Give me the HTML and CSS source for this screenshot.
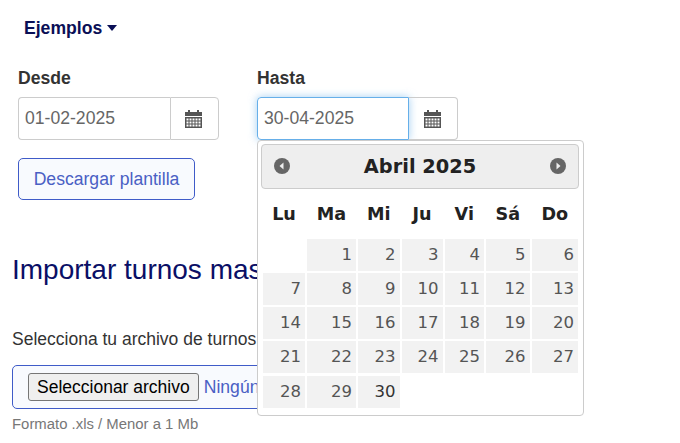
FILE: index.html
```html
<!DOCTYPE html>
<html lang="es">
<head>
  <meta charset="utf-8">
  <title>Importar turnos</title>
  <link rel="stylesheet" href="styles.css">
</head>
<body>
  <div class="examples"><span class="examples-link">Ejemplos</span><span class="caret"></span></div>

  <div class="dates">
    <div class="date-field">
      <label class="date-label">Desde</label>
      <div class="input-group">
        <div class="date-input">01-02-2025</div>
        <div class="addon">
          <svg class="cal-icon" width="17" height="18" viewBox="0 0 17 18"><path fill="#555" fill-rule="evenodd" d="M3 0h2v2h7V0h2v2h3v4H0V2h3zM0 7h17v11H0zM1.5 8.5v2h2v-2zm3 0v2h2v-2zm3 0v2h2v-2zm3 0v2h2v-2zm3 0v2h2v-2zm-12 3v2h2v-2zm3 0v2h2v-2zm3 0v2h2v-2zm3 0v2h2v-2zm3 0v2h2v-2zm-12 3v2h2v-2zm3 0v2h2v-2zm3 0v2h2v-2zm3 0v2h2v-2zm3 0v2h2v-2z"/></svg>
        </div>
      </div>
    </div>
    <div class="date-field">
      <label class="date-label">Hasta</label>
      <div class="input-group">
        <div class="date-input focused">30-04-2025</div>
        <div class="addon">
          <svg class="cal-icon" width="17" height="18" viewBox="0 0 17 18"><path fill="#555" fill-rule="evenodd" d="M3 0h2v2h7V0h2v2h3v4H0V2h3zM0 7h17v11H0zM1.5 8.5v2h2v-2zm3 0v2h2v-2zm3 0v2h2v-2zm3 0v2h2v-2zm3 0v2h2v-2zm-12 3v2h2v-2zm3 0v2h2v-2zm3 0v2h2v-2zm3 0v2h2v-2zm3 0v2h2v-2zm-12 3v2h2v-2zm3 0v2h2v-2zm3 0v2h2v-2zm3 0v2h2v-2zm3 0v2h2v-2z"/></svg>
        </div>
      </div>
      <div class="datepicker">
        <div class="dp-header">
          <svg width="16" height="16" viewBox="0 0 16 16"><circle cx="8" cy="8" r="8" fill="#666"/><path fill="#eee" d="M9.5 4.5v7L5.5 8z"/></svg>
          <span class="dp-title">Abril 2025</span>
          <svg width="16" height="16" viewBox="0 0 16 16"><circle cx="8" cy="8" r="8" fill="#666"/><path fill="#eee" d="M6.5 4.5v7l4-3.5z"/></svg>
        </div>
        <table class="dp-table">
          <colgroup>
            <col class="c1"><col class="c2"><col class="c3"><col class="c4"><col class="c5"><col class="c6"><col class="c7">
          </colgroup>
          <thead>
            <tr><th>Lu</th><th>Ma</th><th>Mi</th><th>Ju</th><th>Vi</th><th>Sá</th><th>Do</th></tr>
          </thead>
          <tbody>
            <tr><td></td><td><a>1</a></td><td><a>2</a></td><td><a>3</a></td><td><a>4</a></td><td><a>5</a></td><td><a>6</a></td></tr>
            <tr><td><a>7</a></td><td><a>8</a></td><td><a>9</a></td><td><a>10</a></td><td><a>11</a></td><td><a>12</a></td><td><a>13</a></td></tr>
            <tr><td><a>14</a></td><td><a>15</a></td><td><a>16</a></td><td><a>17</a></td><td><a>18</a></td><td><a>19</a></td><td><a>20</a></td></tr>
            <tr><td><a>21</a></td><td><a>22</a></td><td><a>23</a></td><td><a>24</a></td><td><a>25</a></td><td><a>26</a></td><td><a>27</a></td></tr>
            <tr class="last-row"><td><a>28</a></td><td><a>29</a></td><td><a class="selected">30</a></td><td></td><td></td><td></td><td></td></tr>
          </tbody>
        </table>
      </div>
    </div>
  </div>

  <button class="btn-outline">Descargar plantilla</button>

  <h2 class="import-title">Importar turnos masivamente</h2>
  <p class="import-text">Selecciona tu archivo de turnos para importarlos</p>
  <div class="file-box">
    <span class="file-btn">Seleccionar archivo</span>
    <span class="file-name">Ningún archivo seleccionado</span>
  </div>
  <p class="file-hint">Formato .xls / Menor a 1 Mb</p>
</body>
</html>
```

FILE: styles.css
```css
html {
  overflow: hidden;
}
body {
  margin: 0;
  height: 443px;
  overflow: hidden;
  background-color: #fff;
  font-family: "Liberation Sans", Arial, sans-serif;
  font-size: 17.6px;
  color: #333;
}

.examples {
  display: flex;
  align-items: center;
  padding: 19px 0 0 24px;
  height: 18px;
  font-weight: bold;
  color: #0a0f56;
}
.caret {
  margin-left: 5px;
  border-top: 6px solid #0a0f56;
  border-left: 5px solid transparent;
  border-right: 5px solid transparent;
}

.dates {
  display: flex;
  gap: 38px;
  padding: 32px 0 0 18px;
}
.date-field {
  position: relative;
  width: 201px;
}
.date-label {
  display: block;
  height: 18px;
  margin-bottom: 10px;
  font-weight: bold;
  line-height: 18px;
  color: #333;
}
.input-group {
  display: flex;
  height: 43px;
}
.date-input {
  width: 152px;
  box-sizing: border-box;
  padding-left: 6px;
  border: 1px solid #ccc;
  border-right: 0;
  border-radius: 4px 0 0 4px;
  line-height: 40px;
  color: #666;
}
.date-input.focused {
  border: 1px solid #66afe9;
  box-shadow: 0 0 8px rgba(102, 175, 233, .6);
  border-radius: 4px 0 0 4px;
}
.addon {
  flex: 1;
  display: flex;
  align-items: center;
  justify-content: center;
  padding-right: 2px;
  border: 1px solid #ccc;
  border-radius: 0 4px 4px 0;
}
.focused + .addon {
  border-left: 0;
}

.datepicker {
  position: absolute;
  top: 71px;
  left: 0;
  z-index: 2;
  width: 327px;
  height: 276px;
  box-sizing: border-box;
  padding: 3px;
  border: 1px solid #ccc;
  border-radius: 4px;
  background-color: #fff;
  font-family: "DejaVu Sans", Verdana, sans-serif;
  color: #222;
}
.dp-header {
  display: flex;
  align-items: center;
  justify-content: space-between;
  height: 45px;
  box-sizing: border-box;
  margin-right: 1px;
  padding: 0 12px 1px;
  border: 1px solid #ccc;
  border-radius: 4px;
  background-color: #eee;
}
.dp-title {
  font-size: 19.36px;
  font-weight: bold;
}
.dp-table {
  table-layout: fixed;
  width: 317px;
  margin: 6px 0 0 1px;
  border-collapse: collapse;
}
.c1 { width: 44px; }
.c2 { width: 51px; }
.c3 { width: 43.5px; }
.c4 { width: 43px; }
.c5 { width: 41.5px; }
.c6 { width: 45.5px; }
.c7 { width: 48.5px; }
.dp-table th {
  height: 37px;
  padding: 0 0 6px;
  font-size: 17.6px;
  font-weight: bold;
  text-align: center;
}
.dp-table td {
  padding: 1px;
  border: 0;
}
.dp-table .last-row td {
  padding-top: 2px;
}
.dp-table a {
  display: block;
  height: 32px;
  padding-right: 4px;
  background-color: #f2f2f2;
  font-size: 16.5px;
  line-height: 32px;
  text-align: right;
  color: #555;
}
.dp-table a.selected {
  color: #333;
}

.btn-outline {
  display: block;
  width: 177px;
  height: 42px;
  margin: 18px 0 0 18px;
  padding: 0;
  border: 1px solid #3f5bc8;
  border-radius: 5px;
  background-color: #f8fafe;
  font-family: inherit;
  font-size: 17.6px;
  color: #4a5fc4;
}

.import-title {
  margin: 0;
  padding: 54px 0 0 12px;
  font-size: 28px;
  font-weight: normal;
  line-height: 31px;
  white-space: nowrap;
  color: #0a0f66;
}
.import-text {
  margin: 0;
  padding: 45px 0 0 12px;
  font-size: 17.5px;
  line-height: 18px;
  white-space: nowrap;
  color: #333;
}
.file-box {
  display: flex;
  align-items: center;
  gap: 5px;
  width: 500px;
  height: 44px;
  box-sizing: border-box;
  margin: 17px 0 0 12px;
  padding-left: 15px;
  border: 1px solid #3f5bc8;
  border-radius: 5px;
  background-color: #f8fafe;
  white-space: nowrap;
  color: #4a5fc4;
}
.file-btn {
  padding: 3px 8px;
  border: 1px solid #767676;
  border-radius: 3px;
  background-color: #efefef;
  font-size: 17.5px;
  line-height: 20px;
  color: #000;
}
.file-hint {
  margin: 0;
  padding: 7px 0 0 12px;
  font-size: 14.9px;
  line-height: 16px;
  color: #777;
}
```
